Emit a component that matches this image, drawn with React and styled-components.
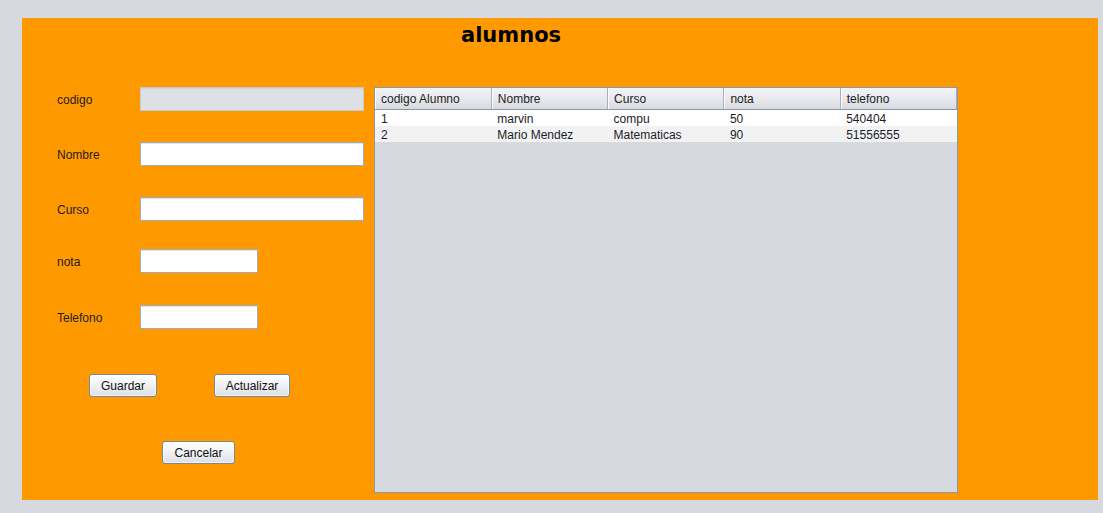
import React from "react";
import styled, { createGlobalStyle } from "styled-components";

const GlobalStyle = createGlobalStyle`
  html, body {
    margin: 0;
    padding: 0;
    background: #d6d9e0;
  }
  body {
    font-family: "Liberation Sans", Arial, sans-serif;
    font-size: 12px;
    color: #1e1e1e;
  }
`;

const Page = styled.div`
  width: 1103px;
  height: 513px;
  padding: 18px 0 0 22px;
  box-sizing: border-box;
`;

const Panel = styled.div`
  width: 1076px;
  height: 482px;
  background: #ff9900;
  display: flex;
  flex-direction: column;
`;

const Title = styled.div`
  height: 69px;
  box-sizing: border-box;
  padding: 4px 0 0 439px;
  font-family: "DejaVu Sans", Verdana, sans-serif;
  font-weight: bold;
  font-size: 21px;
  line-height: 26px;
  color: #000;
`;

const Body = styled.div`
  display: flex;
  align-items: flex-start;
`;

const Form = styled.div`
  width: 352px;
  display: flex;
  flex-direction: column;
`;

const FieldRow = styled.div`
  display: flex;
  align-items: center;
  height: 24px;
  margin-top: ${({ $top }) => $top || 0}px;
  padding-left: 35px;
`;

const Label = styled.label`
  width: 83px;
  padding-top: 2px;
  font-size: 12px;
  color: #1e1e1e;
`;

const Input = styled.input`
  box-sizing: border-box;
  width: ${({ $w }) => $w}px;
  height: 24px;
  margin: 0;
  padding: 2px 4px;
  border: 1px solid ${({ disabled }) => (disabled ? "#c4c9d1" : "#a4abb5")};
  box-shadow: inset 0 1px 0 ${({ disabled }) => (disabled ? "#d2d6dc" : "#e2e5ea")};
  background: ${({ disabled }) => (disabled ? "#dde1e6" : "#ffffff")};
  font-family: "Liberation Sans", Arial, sans-serif;
  font-size: 12px;
  outline: none;
`;

const ButtonRow = styled.div`
  display: flex;
  gap: ${({ $gap }) => $gap || 0}px;
  margin-top: ${({ $top }) => $top || 0}px;
  padding-left: ${({ $left }) => $left || 0}px;
`;

const Button = styled.button`
  box-sizing: border-box;
  width: ${({ $w }) => $w}px;
  height: 23px;
  padding: 1px 0 0;
  border: 1px solid #7c8796;
  border-radius: 3px;
  background: linear-gradient(#ffffff 0%, #f1f3f6 45%, #dcdfe5 100%);
  box-shadow: inset 0 0 0 1px rgba(255, 255, 255, 0.6);
  font-family: "Liberation Sans", Arial, sans-serif;
  font-size: 12px;
  color: #111;
  cursor: pointer;
`;

const TableFrame = styled.div`
  width: 584px;
  height: 406px;
  box-sizing: border-box;
  border: 1px solid #8d97a6;
  background: #d6d9e0;
  overflow: hidden;
`;

const Grid = styled.table`
  width: 100%;
  border-collapse: collapse;
  table-layout: fixed;
`;

const HeadCell = styled.th`
  height: 21px;
  box-sizing: border-box;
  padding: 2px 0 0 6px;
  text-align: left;
  font-weight: normal;
  font-size: 12px;
  color: #222;
  background: linear-gradient(#f3f4f7 0%, #e6e8ec 55%, #d7dae0 100%);
  border-right: 1px solid #a8afba;
  border-bottom: 1px solid #8d97a6;
  box-shadow: inset 1px 0 0 #ffffff;
`;

const BodyRow = styled.tr`
  background: ${({ $alt }) => ($alt ? "#f2f2f2" : "#ffffff")};
`;

const Cell = styled.td`
  height: 16px;
  box-sizing: border-box;
  padding: 2px 0 0 6px;
  font-size: 12px;
  line-height: 14px;
  color: #1c1c2a;
  white-space: nowrap;
  overflow: hidden;
`;

const columns = ["codigo Alumno", "Nombre", "Curso", "nota", "telefono"];

const rows = [
  ["1", "marvin", "compu", "50", "540404"],
  ["2", "Mario Mendez", "Matematicas", "90", "51556555"],
];

export default function App() {
  return (
    <Page>
      <GlobalStyle />
      <Panel>
        <Title>alumnos</Title>
        <Body>
          <Form>
            <FieldRow>
              <Label>codigo</Label>
              <Input $w={224} disabled />
            </FieldRow>
            <FieldRow $top={31}>
              <Label>Nombre</Label>
              <Input $w={224} />
            </FieldRow>
            <FieldRow $top={31}>
              <Label>Curso</Label>
              <Input $w={224} />
            </FieldRow>
            <FieldRow $top={28}>
              <Label>nota</Label>
              <Input $w={118} />
            </FieldRow>
            <FieldRow $top={32}>
              <Label>Telefono</Label>
              <Input $w={118} />
            </FieldRow>
            <ButtonRow $top={45} $left={67} $gap={57}>
              <Button $w={68}>Guardar</Button>
              <Button $w={76}>Actualizar</Button>
            </ButtonRow>
            <ButtonRow $top={44} $left={140}>
              <Button $w={73}>Cancelar</Button>
            </ButtonRow>
          </Form>
          <TableFrame>
            <Grid>
              <thead>
                <tr>
                  {columns.map((c) => (
                    <HeadCell key={c}>{c}</HeadCell>
                  ))}
                </tr>
              </thead>
              <tbody>
                {rows.map((r, i) => (
                  <BodyRow key={i} $alt={i % 2 === 1}>
                    {r.map((v, j) => (
                      <Cell key={j}>{v}</Cell>
                    ))}
                  </BodyRow>
                ))}
              </tbody>
            </Grid>
          </TableFrame>
        </Body>
      </Panel>
    </Page>
  );
}
